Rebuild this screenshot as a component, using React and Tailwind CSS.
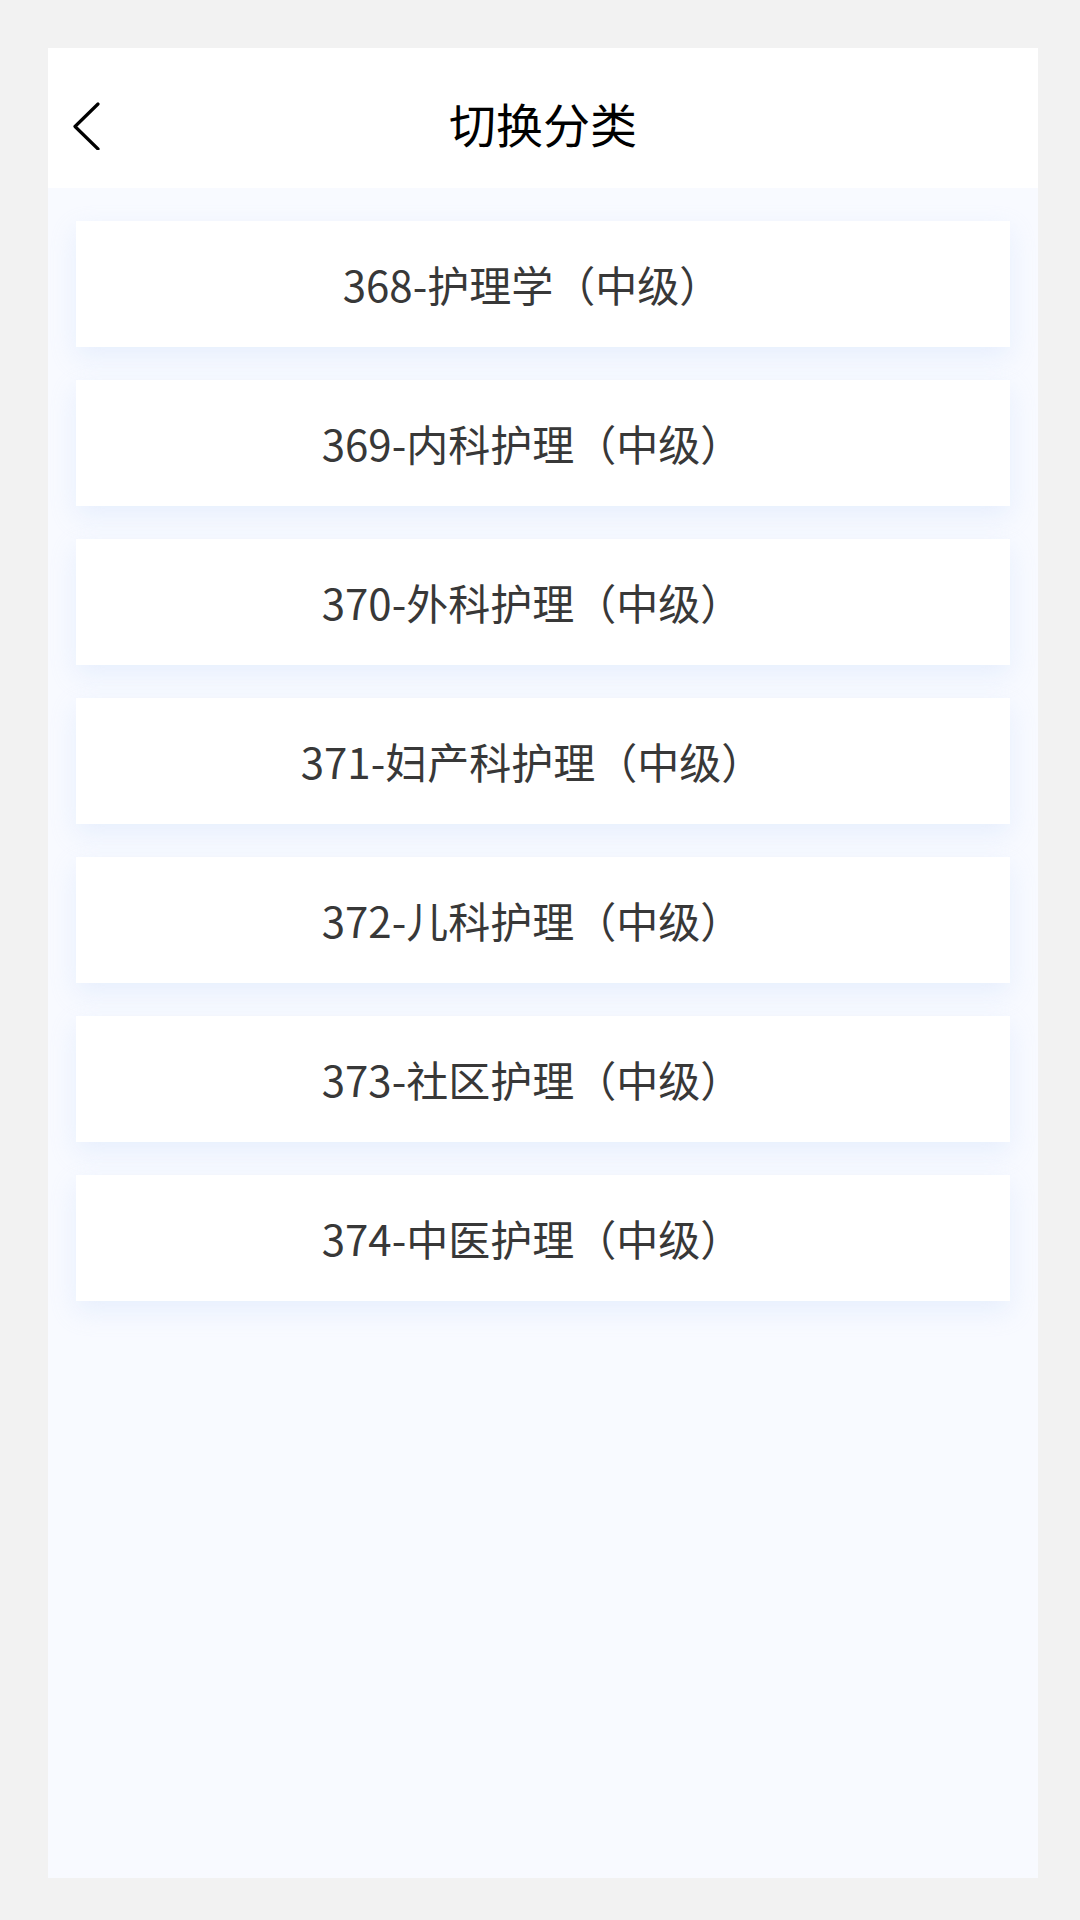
const categories = [
  "368-护理学（中级）",
  "369-内科护理（中级）",
  "370-外科护理（中级）",
  "371-妇产科护理（中级）",
  "372-儿科护理（中级）",
  "373-社区护理（中级）",
  "374-中医护理（中级）",
];

const fontStack = {
  fontFamily: '"Noto Sans CJK SC", "Noto Sans", sans-serif',
};

export default function App() {
  return (
    <div className="min-h-[1920px] w-[1080px] bg-[#f2f2f2] pt-[48px]" style={fontStack}>
      <div className="ml-[48px] flex h-[1830px] w-[990px] flex-col bg-[#f8faff]">
        {/* header */}
        <div className="relative flex h-[140px] items-center justify-center bg-white pt-2">
          <button className="absolute left-[18px] top-[52px] flex h-[50px] w-[40px] items-center justify-center">
            <svg width="30" height="50" viewBox="0 0 30 50" fill="none">
              <path
                d="M27 4 L4 26.5 L27 49"
                stroke="#000"
                strokeWidth="3.2"
                strokeLinecap="round"
                strokeLinejoin="round"
              />
            </svg>
          </button>
          <h1 className="text-[47px] font-normal leading-none text-black">切换分类</h1>
        </div>

        {/* list */}
        <div className="flex flex-col gap-[33px] px-[28px] pt-[33px]">
          {categories.map((name) => (
            <div
              key={name}
              className="flex h-[126px] items-center justify-center bg-white pr-[22px] shadow-[0_10px_24px_rgba(210,226,250,0.45)]"
            >
              <span className="text-[42px] leading-none text-[#383838]">{name}</span>
            </div>
          ))}
        </div>
      </div>
    </div>
  );
}
